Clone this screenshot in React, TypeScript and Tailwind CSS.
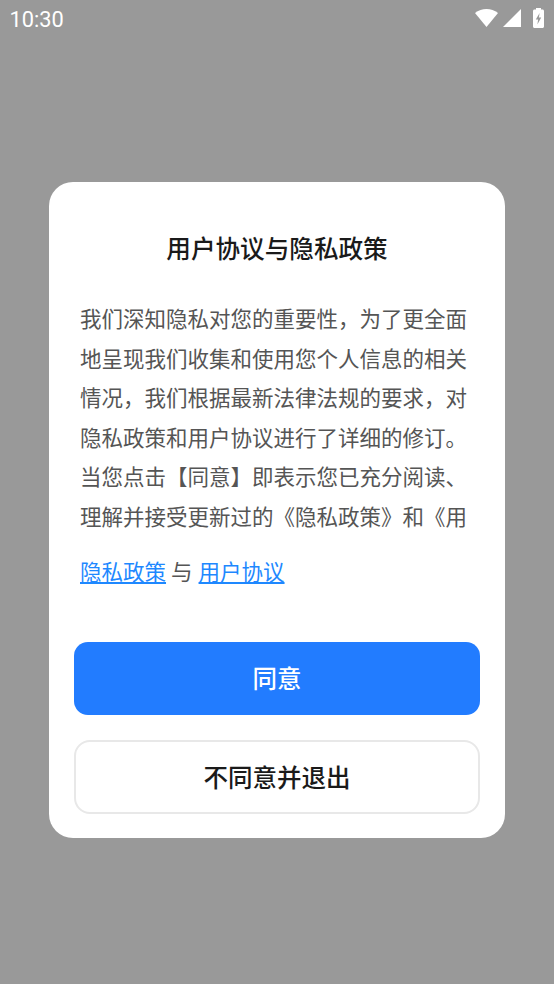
import * as React from "react";

const CJK = "font-['Noto_Sans_CJK_SC','Noto_Sans',sans-serif]";

function StatusIcons() {
  return (
    <div className="flex items-center">
      {/* wifi */}
      <svg width="23" height="18" viewBox="0 0 23 18">
        <path d="M0 4 C3.4 1.3 7.4 0 11.5 0 C15.6 0 19.6 1.3 23 4 L11.5 18 Z" fill="#fff" />
      </svg>
      {/* signal */}
      <svg width="18" height="18" viewBox="0 0 18 18" className="ml-[5px]">
        <path d="M0 18 L18 0 L18 18 Z" fill="#fff" />
      </svg>
      {/* battery charging */}
      <svg width="11" height="20" viewBox="0 0 11 20" className="ml-[12px]">
        <path
          d="M3 0 H8 V1.5 H9.5 C10.3 1.5 11 2.2 11 3 V18.5 C11 19.3 10.3 20 9.5 20 H1.5 C0.7 20 0 19.3 0 18.5 V3 C0 2.2 0.7 1.5 1.5 1.5 H3 Z"
          fill="#fff"
        />
        <path d="M6.6 5 L2.8 11.5 H5.1 L4.4 16.5 L8.2 9.5 H5.9 Z" fill="#999999" />
      </svg>
    </div>
  );
}

export default function App() {
  return (
    <div className={`flex h-[984px] w-[554px] flex-col overflow-hidden bg-[#999999] ${CJK}`}>
      {/* Status bar */}
      <div className="flex h-[36px] shrink-0 items-center justify-between pl-[9.5px] pr-[10px]">
        <span className="pt-[3px] font-['Roboto',sans-serif] text-[21.8px] leading-none text-white">10:30</span>
        <StatusIcons />
      </div>

      {/* Dialog */}
      <div className="ml-[49px] mt-[146px] flex h-[656px] w-[456px] flex-col rounded-[24px] bg-white">
        <h1 className="mt-[48px] text-center text-[24.6px] font-medium leading-[34px] text-[#1a1a1a]">
          用户协议与隐私政策
        </h1>

        <div className="mx-[31px] mt-[34px] h-[237px]">
          <p className="w-[394px] text-[21.5px] leading-[39.5px] text-[#555555]">
            我们深知隐私对您的重要性，为了更全面地呈现我们收集和使用您个人信息的相关情况，我们根据最新法律法规的要求，对隐私政策和用户协议进行了详细的修订。当您点击【同意】即表示您已充分阅读、理解并接受更新过的《隐私政策》和《用
          </p>
        </div>

        <div className="mx-[31px] mt-[16px] flex gap-[5px] text-[21.5px] leading-[39px] text-[#555555]">
          <a className="text-[#1e88ff] underline">隐私政策</a>
          <span>与</span>
          <a className="ml-[1px] text-[#1e88ff] underline">用户协议</a>
        </div>

        <div className="mx-[25px] mt-[52px] flex flex-col gap-[25px]">
          <button className="h-[73px] rounded-[14px] bg-[#227cff] text-[24.5px] font-medium text-white">
            同意
          </button>
          <button className="h-[74px] rounded-[16px] border-2 border-[#e8e8e8] bg-white text-[24.5px] font-medium text-[#1a1a1a]">
            不同意并退出
          </button>
        </div>
      </div>
    </div>
  );
}
